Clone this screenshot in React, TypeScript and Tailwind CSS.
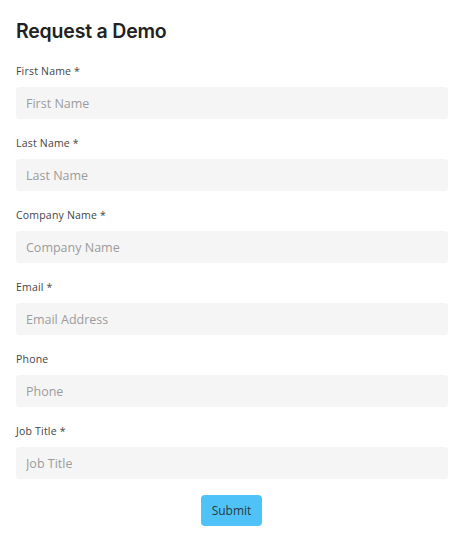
import React from "react";

const fields = [
  { label: "First Name *", placeholder: "First Name" },
  { label: "Last Name *", placeholder: "Last Name" },
  { label: "Company Name *", placeholder: "Company Name" },
  { label: "Email *", placeholder: "Email Address" },
  { label: "Phone", placeholder: "Phone" },
  { label: "Job Title *", placeholder: "Job Title" },
];

export default function App() {
  return (
    <div className="w-[462px] h-[545px] bg-white pl-4 pt-[17px]" style={{ fontFamily: '"Open Sans", sans-serif' }}>
      <h1
        className="text-[19.5px] leading-[28px] font-semibold text-[#222222] mb-[18px] tracking-[-0.2px]"
        style={{ fontFamily: 'Inter, sans-serif' }}
      >
        Request a Demo
      </h1>
      <form className="w-[432px] flex flex-col">
        {fields.map((f) => (
          <div key={f.label} className="flex flex-col mb-4">
            <label className="text-[10.5px] leading-[16px] text-[#444444] mb-2 tracking-[0.2px]">{f.label}</label>
            <input
              className="h-[32px] w-full rounded-[4px] bg-[#f5f5f5] px-[10px] text-[12.5px] text-[#333] placeholder:text-[#9c9c9c] outline-none"
              placeholder={f.placeholder}
            />
          </div>
        ))}
        <div className="flex justify-center pr-[1px]">
          <button
            type="button"
            className="w-[61px] h-[31px] rounded-[4px] bg-[#4fc3f7] text-[12px] text-[#2a3a44]"
          >
            Submit
          </button>
        </div>
      </form>
    </div>
  );
}
